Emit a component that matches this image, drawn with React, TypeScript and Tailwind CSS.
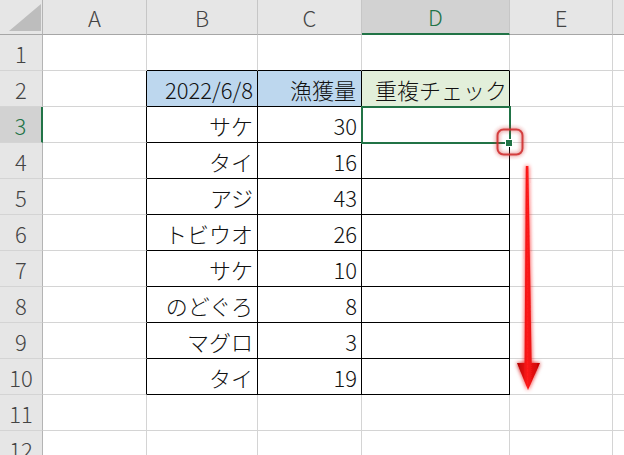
import React from 'react';

const colWidths = 'grid-cols-[43px_104px_111px_104px_148px_103px_120px]';
// last column is only a sliver at the right edge, so no label shows there
const letters = ['A', 'B', 'C', 'D', 'E', ''];

const fish: [string, number][] = [
  ['サケ', 30],
  ['タイ', 16],
  ['アジ', 43],
  ['トビウオ', 26],
  ['サケ', 10],
  ['のどぐろ', 8],
  ['マグロ', 3],
  ['タイ', 19],
];

// cell border: black inside / on edge of the table B2:D10, light grid elsewhere
const cellBorder = (row: number, col: number) => {
  const inTable = row >= 2 && row <= 10 && col >= 1 && col <= 3;
  const rightBlack = inTable || (col === 0 && row >= 2 && row <= 10);
  const bottomBlack = inTable || (row === 1 && col >= 1 && col <= 3);
  return [
    rightBlack ? 'border-r-black' : 'border-r-[#d4d4d4]',
    bottomBlack ? 'border-b-black' : 'border-b-[#d4d4d4]',
  ].join(' ');
};

const cellContent = (row: number, col: number) => {
  if (row === 2) {
    if (col === 1) return { text: '2022/6/8', cls: 'bg-[#bdd7ee] justify-end pr-[4px]' };
    if (col === 2) return { text: '漁獲量', cls: 'bg-[#bdd7ee] justify-end pr-[5px]' };
    if (col === 3) return { text: '重複チェック', cls: 'bg-[#e2efda] justify-start pl-[13px]' };
  }
  if (row >= 3 && row <= 10) {
    const [name, qty] = fish[row - 3];
    if (col === 1) return { text: name, cls: 'justify-end pr-[4px]' };
    if (col === 2) return { text: String(qty), cls: 'justify-end pr-[4px]' };
  }
  return { text: '', cls: '' };
};

const App: React.FC = () => {
  const rows = Array.from({ length: 12 }, (_, i) => i + 1);

  return (
    <div
      className="relative w-[624px] h-[455px] overflow-hidden bg-white text-[22px] font-light"
      style={{ fontFamily: '"Noto Sans CJK JP", "Noto Sans", sans-serif' }}
    >
      <div className={`grid ${colWidths}`}>
        {/* Column headers */}
        <div className="h-[35px] bg-[#e6e6e6] border-r border-b border-r-[#b4b4b4] border-b-[#a6a6a6] flex items-end justify-end pr-[1px] pb-[3px]">
          <svg width="32" height="27" viewBox="0 0 32 27">
            <polygon points="32,0 32,27 0,27" fill="#bdbdbd" />
          </svg>
        </div>
        {letters.map((l, i) =>
          l === 'D' ? (
            <div
              key={i}
              className="h-[35px] bg-[#d2d2d2] border-r border-r-[#c6c6c6] border-b-2 border-b-[#217346] flex items-center justify-center leading-[35px] text-[#217346]"
            >
              {l}
            </div>
          ) : (
            <div
              key={i}
              className="h-[35px] bg-[#e6e6e6] border-r border-b border-r-[#c6c6c6] border-b-[#a6a6a6] flex items-center justify-center leading-[35px] text-[#444]"
            >
              {l}
            </div>
          )
        )}

        {rows.map((r) => (
          <React.Fragment key={r}>
            {r === 3 ? (
              <div className="h-[36px] bg-[#d2d2d2] border-r-2 border-b border-r-[#217346] border-b-[#d4d4d4] flex items-center justify-center leading-[36px] text-[#217346]">
                {r}
              </div>
            ) : (
              <div className="h-[36px] bg-[#e6e6e6] border-r border-b border-r-[#b4b4b4] border-b-[#d4d4d4] flex items-center justify-center leading-[36px] text-[#444]">
                {r}
              </div>
            )}
            {letters.map((_, c) => {
              const { text, cls } = cellContent(r, c);
              return (
                <div
                  key={c}
                  className={`h-[36px] border-r border-b ${cellBorder(r, c)} ${cls} flex items-center leading-[36px] text-[#111] whitespace-nowrap`}
                >
                  {text}
                </div>
              );
            })}
          </React.Fragment>
        ))}
      </div>

      {/* Active cell D3 */}
      <div className="absolute left-[361px] top-[106px] w-[150px] h-[38px] border-2 border-[#217346] pointer-events-none" />
      <div className="absolute left-[505px] top-[139px] w-[8px] h-[8px] bg-[#217346] border border-white pointer-events-none" />

      {/* Annotation: handle highlight + drag arrow */}
      <svg className="absolute left-0 top-0 pointer-events-none" width="624" height="455" viewBox="0 0 624 455">
        <defs>
          <filter id="glow" x="-50%" y="-50%" width="200%" height="200%">
            <feGaussianBlur in="SourceGraphic" stdDeviation="2" result="b" />
            <feMerge>
              <feMergeNode in="b" />
              <feMergeNode in="SourceGraphic" />
            </feMerge>
          </filter>
          <linearGradient id="shaft" x1="0" y1="0" x2="1" y2="0">
            <stop offset="0" stopColor="#b00000" />
            <stop offset="0.45" stopColor="#ff1a1a" />
            <stop offset="1" stopColor="#c00000" />
          </linearGradient>
        </defs>
        <rect x="497.5" y="129.5" width="25" height="25" rx="6" fill="none" stroke="#d02a2a" strokeWidth="2" filter="url(#glow)" opacity="0.9" />
        <path
          d="M525.8 166 L528.4 166 L531.6 363 L540 363 L528 390 L517 363 L524.6 363 Z"
          fill="url(#shaft)"
          filter="url(#glow)"
        />
      </svg>
    </div>
  );
};

export default App;
